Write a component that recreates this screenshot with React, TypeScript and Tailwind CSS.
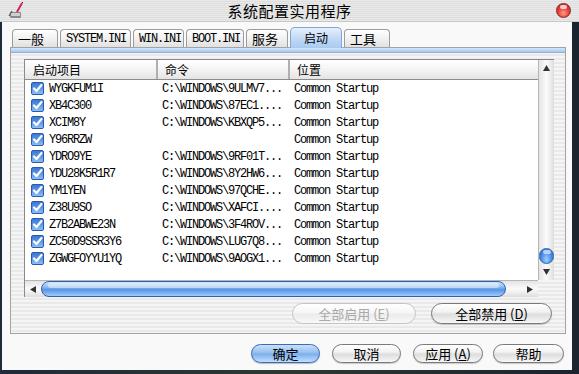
import React from "react";

const rows: [string, string][] = [
  ["WYGKFUM1I", "C:\\WINDOWS\\9ULMV7..."],
  ["XB4C300", "C:\\WINDOWS\\87EC1...."],
  ["XCIM8Y", "C:\\WINDOWS\\KBXQP5..."],
  ["Y96RRZW", ""],
  ["YDRO9YE", "C:\\WINDOWS\\9RF01T..."],
  ["YDU28K5R1R7", "C:\\WINDOWS\\8Y2HW6..."],
  ["YM1YEN", "C:\\WINDOWS\\97QCHE..."],
  ["Z38U9SO", "C:\\WINDOWS\\XAFCI...."],
  ["Z7B2ABWE23N", "C:\\WINDOWS\\3F4ROV..."],
  ["ZC50D9SSR3Y6", "C:\\WINDOWS\\LUG7Q8..."],
  ["ZGWGFOYYU1YQ", "C:\\WINDOWS\\9AOGX1..."],
];

const tabs = [
  { label: "一般", w: "w-[46px]", mono: false },
  { label: "SYSTEM.INI", w: "w-[71px]", mono: true },
  { label: "WIN.INI", w: "w-[51px]", mono: true },
  { label: "BOOT.INI", w: "w-[58px]", mono: true },
  { label: "服务", w: "w-[42px]", mono: false },
  { label: "启动", w: "w-[52px]", mono: false, sel: true },
  { label: "工具", w: "w-[46px]", mono: false },
];

function Check() {
  return (
    <div className="w-[13px] h-[13px] rounded-[2px] border border-[#2b5aa8] bg-[linear-gradient(to_bottom,#3c78d8_0%,#5b95e8_50%,#8cc0f7_100%)] flex items-center justify-center">
      <svg width="11" height="11" viewBox="0 0 11 11">
        <path d="M2 5.5 L4.5 8 L9.5 2" stroke="#ffffff" strokeWidth="2.2" fill="none" strokeLinecap="round" strokeLinejoin="round" />
      </svg>
    </div>
  );
}

function Btn({
  children,
  w,
  h,
  blue,
  disabled,
}: {
  children: React.ReactNode;
  w: string;
  h: string;
  blue?: boolean;
  disabled?: boolean;
}) {
  const base = `${w} ${h} rounded-full flex items-center justify-center text-[13px] font-['Noto_Sans_CJK_SC',sans-serif] leading-none`;
  if (blue)
    return (
      <div className={`${base} border border-[#3c6bb0] text-black bg-[linear-gradient(to_bottom,#c9e0fa_0%,#9cc3f0_40%,#7fb0ec_55%,#bfe0ff_100%)] shadow-[0_1px_1px_rgba(0,0,0,0.25)]`}>
        {children}
      </div>
    );
  if (disabled)
    return (
      <div className={`${base} border border-[#c4c4c4] text-[#a9a9a9] bg-[linear-gradient(to_bottom,#ffffff_0%,#f6f6f6_45%,#ececec_55%,#f8f8f8_100%)]`}>
        {children}
      </div>
    );
  return (
    <div className={`${base} border border-[#7a7a7a] text-black bg-[linear-gradient(to_bottom,#ffffff_0%,#f3f3f3_40%,#dedede_55%,#f7f7f7_100%)] shadow-[0_1px_1px_rgba(0,0,0,0.2)]`}>
      {children}
    </div>
  );
}

export default function App() {
  const stripes =
    "bg-[repeating-linear-gradient(to_bottom,#f5f5f5_0px,#f5f5f5_2px,#e9e9e9_2px,#e9e9e9_4px)]";
  return (
    <div className="w-[579px] h-[374px] bg-[linear-gradient(to_right,#1d2b3a,#2a3a32_50%,#1a2430)] flex flex-col overflow-hidden">
      {/* Title bar */}
      <div className="h-[22px] w-full shrink-0 grid grid-cols-[1fr_auto_1fr] items-center bg-[repeating-linear-gradient(to_bottom,#e9e9e9_0px,#e9e9e9_1px,#dedede_1px,#dedede_2px)] border-b border-[#c8c8c8]">
        <div className="pl-[8px] flex items-center">
          <svg width="16" height="18" viewBox="0 0 16 18">
            <rect x="2" y="10" width="11" height="6" rx="1" fill="#8a8a8a" />
            <rect x="3" y="11" width="9" height="3" fill="#cfcfcf" />
            <path d="M1 14 L4 9" stroke="#555" strokeWidth="1.2" />
            <path d="M9 10 L14 1" stroke="#d0245a" strokeWidth="2" />
            <path d="M14 1 L15 0" stroke="#333" strokeWidth="1" />
          </svg>
        </div>
        <div className="text-[15px] text-black leading-none font-['Noto_Sans_CJK_SC',sans-serif] tracking-[0.5px]">
          系统配置实用程序
        </div>
        <div className="flex justify-end pr-[8px]">
          <div className="w-[15px] h-[15px] rounded-full border border-[#8a2020] bg-[radial-gradient(circle_at_50%_70%,#ff9a8a_0%,#e8453a_45%,#b81e1e_100%)] relative">
            <div className="absolute left-[3px] top-[1px] w-[7px] h-[4px] rounded-full bg-[rgba(255,255,255,0.75)]" />
          </div>
        </div>
      </div>

      {/* Body */}
      <div className="ml-[2px] mr-[7px] mb-[4px] flex-1 bg-[#f9f9f9] flex flex-col">
        {/* Tabs */}
        <div className="h-[25px] pl-[10px] flex items-end gap-[2px] shrink-0">
          {tabs.map((t) =>
            t.sel ? (
              <div
                key={t.label}
                className={`${t.w} h-[21px] mb-[-1px] relative z-10 rounded-t-[5px] border border-b-0 border-[#7ea6d6] bg-[linear-gradient(to_bottom,#e6f0fc_0%,#bcd6f4_60%,#a9caf0_100%)] flex items-start pt-[3px] justify-center text-[12px] leading-[14px] font-['Noto_Sans_CJK_SC',sans-serif]`}
              >
                {t.label}
              </div>
            ) : (
              <div
                key={t.label}
                className={`${t.w} h-[18px] rounded-t-[4px] border border-b-0 border-[#9c9c9c] bg-[linear-gradient(to_bottom,#ffffff_0%,#f1f1f1_50%,#e1e1e1_100%)] flex items-center pl-[5px] ${
                  t.mono
                    ? "text-[12px] tracking-[-1.2px] font-['Liberation_Mono',monospace]"
                    : "text-[13px] font-['Noto_Sans_CJK_SC',sans-serif]"
                } leading-none text-black`}
              >
                {t.label}
              </div>
            )
          )}
        </div>

        {/* Panel */}
        <div className={`ml-[8px] w-[556px] h-[287px] border border-[#a3a3a3] ${stripes} flex flex-col shrink-0`}>
          <div className="h-[5px] shrink-0 border-b border-[#8fb0d8] bg-[linear-gradient(to_bottom,#d9e8fa,#a3c6ee)]" />
          {/* List box */}
          <div className="ml-[13px] mt-[6px] w-[530px] h-[238px] border border-[#8a8a8a] grid grid-cols-[513px_16px] grid-rows-[220px_17px]">
            {/* list content */}
            <div className="bg-white flex flex-col overflow-hidden">
              <div className="h-[20px] shrink-0 flex border-b border-[#8c8c8c] bg-[linear-gradient(to_bottom,#ffffff_0%,#f4f4f4_50%,#e4e4e4_100%)] text-[12px] leading-none font-['Noto_Sans_CJK_SC',sans-serif] text-black">
                <div className="w-[133px] flex items-center pl-[8px] border-r-2 border-r-[#b0b0b0]">启动项目</div>
                <div className="w-[132px] flex items-center pl-[7px] border-r-2 border-r-[#b0b0b0]">命令</div>
                <div className="flex-1 flex items-center pl-[7px]">位置</div>
              </div>
              {rows.map(([n, c]) => (
                <div
                  key={n}
                  className="h-[17px] shrink-0 flex items-center text-[12px] tracking-[-1.2px] leading-none font-['Liberation_Mono',monospace] text-black"
                >
                  <div className="w-[133px] flex items-center pl-[6px] gap-[5px]">
                    <Check />
                    <span>{n}</span>
                  </div>
                  <div className="w-[132px] pl-[4px] whitespace-nowrap">{c}</div>
                  <div className="pl-[4px] whitespace-nowrap">Common Startup</div>
                </div>
              ))}
            </div>
            {/* vertical scrollbar */}
            <div className="border-l border-[#b5b5b5] bg-[linear-gradient(to_right,#e4e4e4,#fbfbfb_50%,#dedede)] flex flex-col items-center">
              <div className="h-[14px] flex items-center justify-center mt-[1px]">
                <svg width="7" height="6" viewBox="0 0 7 6">
                  <polygon points="3.5,0 7,6 0,6" fill="#333" />
                </svg>
              </div>
              <div className="flex-1" />
              <div className="w-[15px] h-[16px] rounded-full border border-[#2f5fb0] bg-[radial-gradient(ellipse_at_50%_75%,#9fd0ff_0%,#4a8be6_55%,#2c63c4_100%)] relative">
                <div className="absolute left-[3px] top-[1px] w-[8px] h-[4px] rounded-full bg-[rgba(255,255,255,0.6)]" />
              </div>
              <div className="h-[16px] flex items-center justify-center">
                <svg width="7" height="6" viewBox="0 0 7 6">
                  <polygon points="0,0 7,0 3.5,6" fill="#333" />
                </svg>
              </div>
            </div>
            {/* horizontal scrollbar */}
            <div className="border-t border-[#b5b5b5] bg-[linear-gradient(to_bottom,#e4e4e4,#fbfbfb_50%,#dedede)] flex items-center">
              <div className="w-[16px] h-full flex items-center justify-center">
                <svg width="6" height="7" viewBox="0 0 6 7">
                  <polygon points="0,3.5 6,0 6,7" fill="#333" />
                </svg>
              </div>
              <div className="w-[465px] h-[16px] rounded-full border border-[#2f5fb0] bg-[linear-gradient(to_bottom,#cfe6ff_0%,#8fbdf2_35%,#5a95e4_55%,#9ccbff_100%)] relative">
                <div className="absolute left-[6px] right-[6px] top-[1px] h-[5px] rounded-full bg-[rgba(255,255,255,0.45)]" />
              </div>
              <div className="flex-1" />
              <div className="w-[16px] h-full flex items-center justify-center">
                <svg width="6" height="7" viewBox="0 0 6 7">
                  <polygon points="0,0 6,3.5 0,7" fill="#333" />
                </svg>
              </div>
            </div>
            <div className={stripes} />
          </div>
          {/* panel buttons */}
          <div className="mt-[6px] flex justify-end gap-[15px] pr-[13px]">
            <Btn w="w-[124px]" h="h-[21px]" disabled>
              全部启用 (<span className="underline">E</span>)
            </Btn>
            <Btn w="w-[121px]" h="h-[21px]">
              全部禁用 (<span className="underline">D</span>)
            </Btn>
          </div>
        </div>

        {/* Bottom buttons */}
        <div className="mt-[10px] flex justify-end pr-[8px]">
          <Btn w="w-[69px]" h="h-[19px]" blue>
            确定
          </Btn>
          <div className="w-[12px]" />
          <Btn w="w-[69px]" h="h-[19px]">
            取消
          </Btn>
          <div className="w-[12px]" />
          <Btn w="w-[70px]" h="h-[19px]">
            应用 (<span className="underline">A</span>)
          </Btn>
          <div className="w-[10px]" />
          <Btn w="w-[71px]" h="h-[19px]">
            帮助
          </Btn>
        </div>
      </div>
    </div>
  );
}
